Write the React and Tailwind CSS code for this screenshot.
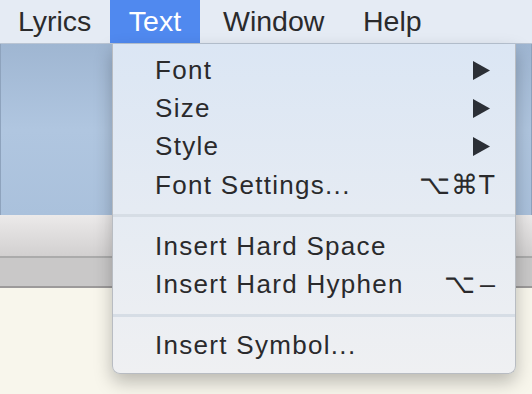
import { useState } from 'react'

const font = { fontFamily: '"Liberation Sans", Arial, sans-serif' }

function Arrow() {
  return (
    <svg width="17" height="19" viewBox="0 0 17 19" className="fill-[#2b2f36]">
      <path d="M0 0 L17 9.5 L0 19 Z" />
    </svg>
  )
}

function Item({ label, right, pr = 'pr-[25px]' }) {
  return (
    <div className={`flex items-center justify-between h-[38.3px] pl-[42px] ${pr} text-[26px] tracking-[0.05em] text-[#2a2a2c]`}>
      <span>{label}</span>
      {right}
    </div>
  )
}

function Separator() {
  return <div className="h-[3px] bg-[#d6dde5] my-[10px]" />
}

export default function App() {
  const [open] = useState(true)

  return (
    <div className="relative w-[532px] h-[394px] overflow-hidden bg-[#f8f6ec]" style={font}>
      {/* menu bar */}
      <div className="flex h-[44px] bg-[#e5ebf4] border-b border-[#b9c4d3] text-[28.5px] text-[#2a2a2c]">
        <div className="w-[110px] pl-[18px] flex items-center">Lyrics</div>
        <div className="w-[90px] flex items-center justify-center bg-[#5089ef] text-white">Text</div>
        <div className="w-[163px] pl-[23px] flex items-center">Window</div>
        <div className="flex items-center">Help</div>
      </div>

      {/* window behind */}
      <div className="h-[171px] bg-gradient-to-b from-[#9fb6d2] via-[#b0c6e0] to-[#aac1dc] border-x border-[#8ea3bd]" />
      <div className="h-[43px] bg-gradient-to-b from-[#eceaea] to-[#d2d0d0] border-b-2 border-[#ababab]" />
      <div className="h-[30px] bg-[#c9c8c8] border-b-2 border-[#9c9a9a]" />
      <div className="h-full bg-[#f8f6ec]" />

      {/* dropdown */}
      {open && (
        <div className="absolute left-[112px] top-[44px] w-[404px] h-[330px] rounded-b-[8px] bg-gradient-to-b from-[#dbe6f4] to-[#eff0f2] border border-t-0 border-[#b8bcc2] shadow-[0_8px_18px_rgba(0,0,0,0.25)] pt-[7px]">
          <Item label="Font" right={<Arrow />} />
          <Item label="Size" right={<Arrow />} />
          <Item label="Style" right={<Arrow />} />
          <Item
            label="Font Settings..."
            pr="pr-[20px]"
            right={
              <span className="flex items-center gap-[1px] text-[27px] tracking-normal">
                <span>⌥</span><span>⌘</span><span>T</span>
              </span>
            }
          />
          <Separator />
          <Item label="Insert Hard Space" />
          <Item
            label="Insert Hard Hyphen"
            pr="pr-[20px]"
            right={
              <span className="flex items-center gap-[5px] text-[27px] tracking-normal">
                <span>⌥</span><span>–</span>
              </span>
            }
          />
          <Separator />
          <Item label="Insert Symbol..." />
        </div>
      )}
    </div>
  )
}
